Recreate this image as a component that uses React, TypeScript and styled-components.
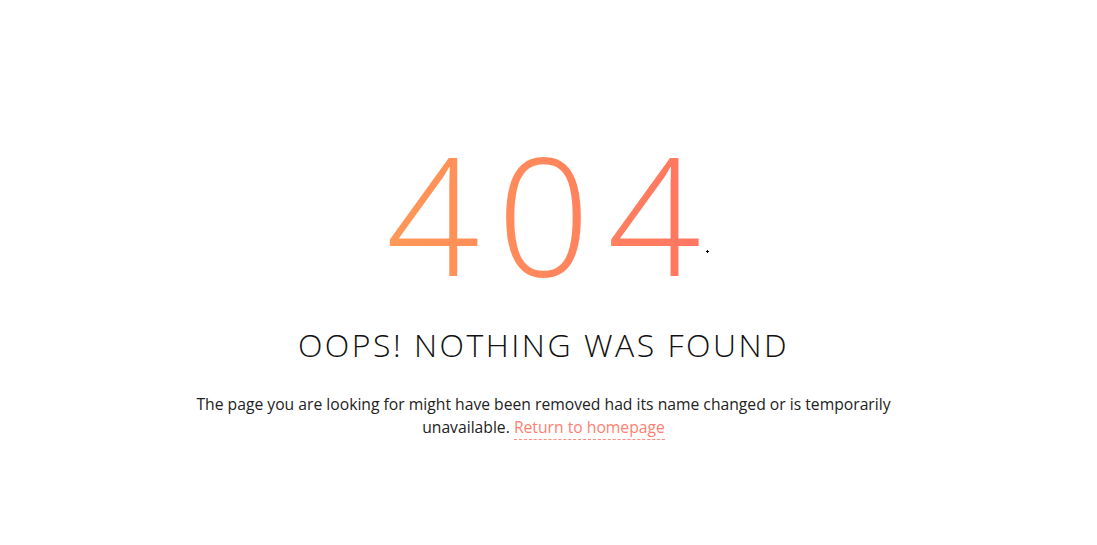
import React from "react";
import styled, { createGlobalStyle } from "styled-components";

const Global = createGlobalStyle`
  html, body { margin: 0; padding: 0; background: #fff; }
  body { font-family: "Open Sans", "Liberation Sans", sans-serif; }
`;

const Page = styled.main`
  width: 100%;
  min-height: 545px;
  display: flex;
  flex-direction: column;
  align-items: center;
  padding: 113px 10px 0 0;
  box-sizing: border-box;
`;

const CodeWrap = styled.div`
  position: relative;
`;

const Code = styled.h1`
  margin: 0;
  padding-left: 17px;
  font-family: "Open Sans", sans-serif;
  font-weight: 340;
  font-size: 164px;
  line-height: 200px;
  letter-spacing: 17px;
  background: linear-gradient(90deg, #ff9a55 0%, #ff7463 100%);
  -webkit-background-clip: text;
  background-clip: text;
  color: transparent;
`;

const Speck = styled.span`
  position: absolute;
  right: 9px;
  top: 137px;
  width: 3px;
  height: 3px;
  &::before, &::after {
    content: "";
    position: absolute;
    background: #000;
  }
  &::before { left: 1px; top: 0; width: 1px; height: 3px; }
  &::after { left: 0; top: 1px; width: 3px; height: 1px; }
`;

const Title = styled.h2`
  margin: 12px 0 0;
  font-family: "Open Sans", sans-serif;
  font-weight: 300;
  font-size: 32px;
  line-height: 40px;
  letter-spacing: 2.5px;
  color: #111;
  text-transform: uppercase;
`;

const Text = styled.p`
  margin: 28px 0 0;
  max-width: 710px;
  font-size: 15.7px;
  line-height: 23px;
  color: #222;
  text-align: center;
`;

const Link = styled.a`
  color: #ff8070;
  text-decoration: none;
  border-bottom: 1px dashed #ff8a80;
  padding-bottom: 1px;
`;

export default function App() {
  return (
    <>
      <Global />
      <Page>
        <CodeWrap>
          <Code>404</Code>
          <Speck />
        </CodeWrap>
        <Title>Oops! Nothing was found</Title>
        <Text>
          The page you are looking for might have been removed had its name changed or is
          temporarily unavailable. <Link href="#">Return to homepage</Link>
        </Text>
      </Page>
    </>
  );
}
